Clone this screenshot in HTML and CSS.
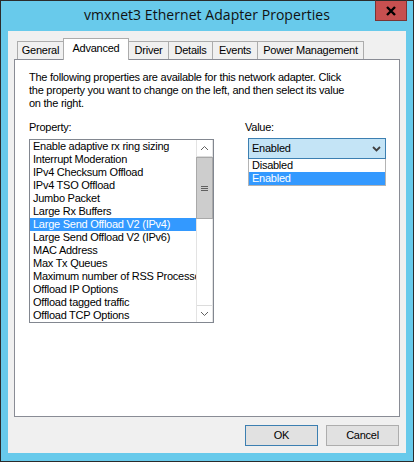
FILE: index.html
```html
<!DOCTYPE html>
<html>
<head>
<meta charset="utf-8">
<link rel="stylesheet" href="styles.css">
</head>
<body>
<div class="window">
  <div class="titlebar">
    <span class="title">vmxnet3 Ethernet Adapter Properties</span>
    <div class="close">
      <svg width="12" height="10" viewBox="0 0 12 10"><path d="M2 1 L10 9 M10 1 L2 9" stroke="#000" stroke-width="2.4" fill="none"/></svg>
    </div>
  </div>
  <div class="client">
    <div class="tabs">
      <div class="tab t-general">General</div>
      <div class="tab t-advanced active">Advanced</div>
      <div class="tab t-driver">Driver</div>
      <div class="tab t-details">Details</div>
      <div class="tab t-events">Events</div>
      <div class="tab t-power">Power Management</div>
    </div>
    <div class="panel">
      <p class="desc">The following properties are available for this network adapter. Click<br>the property you want to change on the left, and then select its value<br>on the right.</p>
      <div class="cols">
        <div class="col-left">
          <div class="label">Property:</div>
          <div class="listbox">
            <ul class="items">
              <li>Enable adaptive rx ring sizing</li>
              <li>Interrupt Moderation</li>
              <li>IPv4 Checksum Offload</li>
              <li>IPv4 TSO Offload</li>
              <li>Jumbo Packet</li>
              <li>Large Rx Buffers</li>
              <li class="sel">Large Send Offload V2 (IPv4)</li>
              <li>Large Send Offload V2 (IPv6)</li>
              <li>MAC Address</li>
              <li>Max Tx Queues</li>
              <li>Maximum number of RSS Processors</li>
              <li>Offload IP Options</li>
              <li>Offload tagged traffic</li>
              <li>Offload TCP Options</li>
            </ul>
            <div class="scrollbar">
              <div class="sb-btn">
                <svg width="9" height="6" viewBox="0 0 9 6"><path d="M1 5 L4.5 1.5 L8 5" stroke="#606060" stroke-width="1" fill="none"/></svg>
              </div>
              <div class="sb-thumb">
                <svg width="7" height="7" viewBox="0 0 7 7"><path d="M0 1.5 H7 M0 3.5 H7 M0 5.5 H7" stroke="#606060" stroke-width="1" fill="none"/></svg>
              </div>
              <div class="sb-track"></div>
              <div class="sb-btn sb-down">
                <svg width="9" height="6" viewBox="0 0 9 6"><path d="M1 1 L4.5 4.5 L8 1" stroke="#606060" stroke-width="1" fill="none"/></svg>
              </div>
            </div>
          </div>
        </div>
        <div class="col-right">
          <div class="label">Value:</div>
          <div class="combo-wrap">
            <div class="combo">
              <span>Enabled</span>
              <svg width="9" height="6" viewBox="0 0 9 6"><path d="M1 1 L4.5 4.5 L8 1" stroke="#404040" stroke-width="1.8" fill="none"/></svg>
            </div>
            <ul class="dropdown">
              <li>Disabled</li>
              <li class="sel">Enabled</li>
            </ul>
          </div>
        </div>
      </div>
    </div>
    <div class="buttons">
      <div class="btn default">OK</div>
      <div class="btn">Cancel</div>
    </div>
  </div>
</div>
</body>
</html>
```
FILE: styles.css
```css
html, body {
  margin: 0;
  padding: 0;
  background: #fff;
}
.window {
  width: 414px;
  height: 462px;
  box-sizing: border-box;
  border: 1px solid #2b2b2b;
  background: #68caeb;
  display: flex;
  flex-direction: column;
}
.titlebar {
  height: 30px;
  position: relative;
  display: flex;
  justify-content: center;
  align-items: flex-start;
}
.title {
  font-family: "Open Sans", "Noto Sans", sans-serif;
  font-size: 14px;
  line-height: 28px;
  color: #111;
  letter-spacing: 0.05px;
}
.close {
  position: absolute;
  top: -1px;
  right: 6px;
  width: 32px;
  height: 21px;
  box-sizing: border-box;
  background: #c75050;
  border: 1px solid #7a3434;
  border-top-color: #2b2b2b;
  display: flex;
  align-items: center;
  justify-content: center;
}
.client {
  flex: 1;
  margin: 0 7px 8px 7px;
  background: #f0f0f0;
  padding: 7px 6px 7px 6px;
  display: flex;
  flex-direction: column;
  font-family: "Liberation Sans", Arial, sans-serif;
  font-size: 11px;
  letter-spacing: -0.25px;
  color: #000;
}
.tabs {
  height: 21px;
  display: flex;
  align-items: flex-end;
  margin-left: 3px;
  position: relative;
  z-index: 1;
}
.tab {
  height: 18px;
  box-sizing: border-box;
  border: 1px solid #acacac;
  border-bottom: none;
  background: #f0f0f0;
  display: flex;
  align-items: center;
  justify-content: center;
  line-height: 13px;
  margin-left: -1px;
}
.t-general { width: 47px; margin-left: 0; }
.t-advanced { width: 66px; }
.t-driver { width: 41px; }
.t-details { width: 45px; }
.t-events { width: 46px; }
.t-power { width: 107px; }
.tab.active {
  height: 22px;
  background: #fff;
  margin-bottom: -1px;
  padding-bottom: 2px;
  position: relative;
  z-index: 2;
}
.panel {
  width: 386px;
  height: 358px;
  box-sizing: border-box;
  border: 1px solid #898c95;
  background: #fff;
  padding: 11px 14px 0 14px;
}
.desc {
  margin: 0;
  line-height: 13px;
}
.cols {
  display: flex;
  margin-top: 11px;
  gap: 31px;
}
.label {
  line-height: 13px;
}
.col-left {
  width: 185px;
}
.listbox {
  margin-top: 5px;
  height: 184px;
  box-sizing: border-box;
  border: 1px solid #828790;
  display: flex;
}
.items {
  list-style: none;
  margin: 0;
  padding: 0;
  flex: 1;
  overflow: hidden;
}
.items li {
  height: 13px;
  line-height: 13px;
  padding-left: 3px;
  white-space: nowrap;
}
.items li.sel,
.dropdown li.sel {
  background: #3399ff;
  color: #fff;
}
.scrollbar {
  width: 17px;
  box-sizing: border-box;
  border-left: 1px solid #e3e3e3;
  border-right: 1px solid #e3e3e3;
  background: #fff;
  display: flex;
  flex-direction: column;
}
.sb-btn {
  height: 17px;
  box-sizing: border-box;
  border-bottom: 1px solid #dcdcdc;
  display: flex;
  align-items: center;
  justify-content: center;
}
.sb-down {
  border-bottom: none;
  border-top: 1px solid #dcdcdc;
}
.sb-thumb {
  height: 62px;
  box-sizing: border-box;
  background: #cdcdcd;
  border: 1px solid #a9a9a9;
  margin: 0 -1px;
  display: flex;
  align-items: center;
  justify-content: center;
}
.sb-track {
  flex: 1;
}
.col-right {
  width: 141px;
}
.combo-wrap {
  margin-top: 4px;
  margin-left: 3px;
  width: 138px;
  position: relative;
}
.combo {
  height: 21px;
  box-sizing: border-box;
  border: 1px solid #3c7fb1;
  background: #c4e4f6;
  display: flex;
  align-items: center;
  justify-content: space-between;
  padding: 0 4px 0 3px;
  line-height: 13px;
}
.dropdown {
  position: absolute;
  left: 0;
  top: 21px;
  width: 138px;
  box-sizing: border-box;
  list-style: none;
  margin: 0;
  padding: 0;
  border: 1px solid #b4b4b4;
  border-top: none;
  background: #fff;
}
.dropdown li {
  height: 13px;
  line-height: 13px;
  padding-left: 3px;
}
.buttons {
  margin-top: 8px;
  display: flex;
  justify-content: flex-end;
  gap: 8px;
  margin-right: 1px;
}
.btn {
  width: 73px;
  height: 21px;
  box-sizing: border-box;
  border: 1px solid #adadad;
  background: #e1e1e1;
  display: flex;
  align-items: center;
  justify-content: center;
  line-height: 13px;
}
.btn.default {
  border-color: #3c7fb1;
}
```
